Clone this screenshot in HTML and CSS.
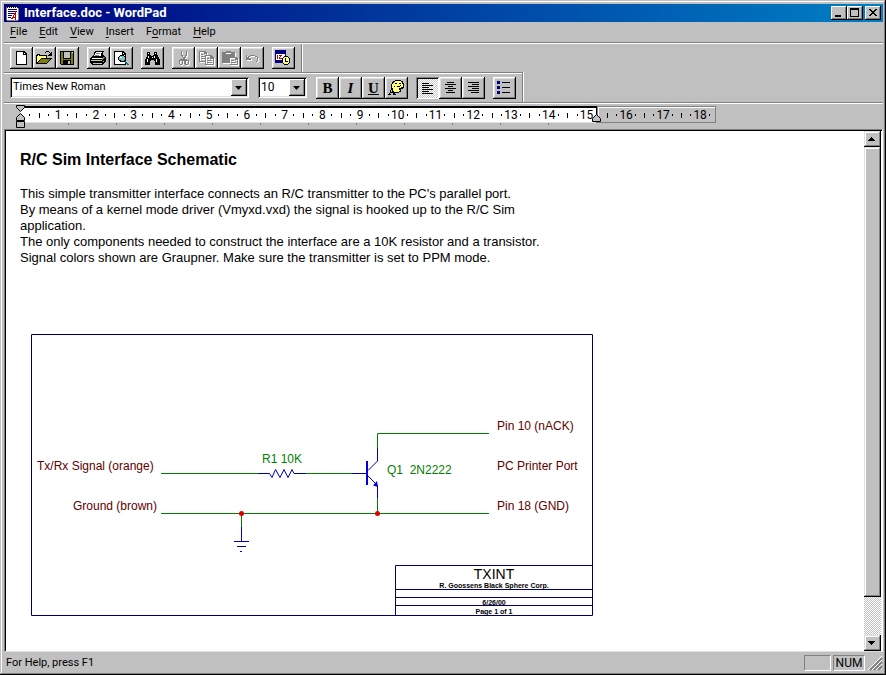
FILE: index.html
```html
<!DOCTYPE html>
<html lang="en">
<head>
<meta charset="utf-8">
<title>Interface.doc - WordPad</title>
<link rel="stylesheet" href="styles.css">
</head>
<body>
<div class="window">
  <header class="titlebar">
    <svg class="app-icon" width="16" height="16" viewBox="0 0 16 16" shape-rendering="crispEdges" aria-hidden="true">
      <path fill="#fff" d="M2 2h11v13H2z"/><path fill="#808080" d="M1 2h1v13H1zM13 3h1v12h-1zM2 15h11v1H2z"/>
      <path fill="#000" d="M2 1h1v2H2zM4 1h1v2H4zM6 1h1v2H6zM8 1h1v2H8zM10 1h1v2h-1zM12 1h1v2h-1z"/>
      <path fill="#000080" d="M3 4h9v1H3zM3 6h9v1H3zM3 8h7v1H3zM3 10h4v1H3zM3 12h3v1H3z"/>
      <path fill="none" stroke="#c00000" d="M6.500 14.500L10.500 7.500V14.500M8 12.500H11"/>
    </svg>
    <h1>Interface.doc - WordPad</h1>
    <div class="caption-buttons">
      <button type="button" aria-label="Minimize"><svg width="16" height="14" viewBox="0 0 16 14"><path d="M4 9h6v2H4z"/></svg></button>
      <button type="button" aria-label="Maximize"><svg width="16" height="14" viewBox="0 0 16 14"><path fill-rule="evenodd" d="M3 2h9v9H3zM4 4v6h7V4z"/></svg></button>
      <button type="button" aria-label="Close" class="close"><svg width="16" height="14" viewBox="0 0 16 14"><path d="M4 3h2v1h1v1h2V4h1V3h2v1h-1v1h-1v1H9v1h1v1h1v1h1v1h-2V9H9V8H7v1H6v1H4V9h1V8h1V7h1V6H6V5H5V4H4z"/></svg></button>
    </div>
  </header>

  <nav class="menubar" aria-label="Menu">
    <button type="button"><u>F</u>ile</button>
    <button type="button"><u>E</u>dit</button>
    <button type="button"><u>V</u>iew</button>
    <button type="button"><u>I</u>nsert</button>
    <button type="button">F<u>o</u>rmat</button>
    <button type="button"><u>H</u>elp</button>
  </nav>

  <div class="bars">
    <div class="toolbar" role="toolbar" aria-label="Standard">
      <div class="group">
        <button type="button" class="tool" aria-label="New"><svg viewBox="0 0 23 22"><path fill="#000" d="M6 4h8l3 3v11H6z"/><path fill="#fff" d="M7 5h6v3h3v9H7z"/><path fill="#fff" d="M14 6h1v1h-1z"/></svg></button>
        <button type="button" class="tool" aria-label="Open"><svg viewBox="0 0 23 22"><path d="M3 8h1V7h3v1h7v3h5v1h-1v1h-1v1h-1v1h-1v1h-1v1H3z"/><path fill="#ffff80" d="M4 9h1V8h1v1h7v2H8v1H7v1H6v1H5v1H4z"/><path fill="#808000" d="M8 12h9v1h-1v1h-1v1h-1v1H5v-1h1v-1h1v-1h1z"/><path d="M12 5h1V4h3v1h1v1h1V5h1v4h-4V8h1V7h1V6h-1V5h-3v1h-1z"/></svg></button>
        <button type="button" class="tool" aria-label="Save"><svg viewBox="0 0 23 22"><path d="M4 4h14v14H5l-1-1z"/><path fill="#808000" d="M5 5h2v7h8V5h2v12h-2v-4H7v4H5z"/><path fill="#c0c0c0" d="M8 5h6v6H8zM12 14h2v3h-2z"/><path fill="#fff" d="M16 5h1v1h-1z"/></svg></button>
      </div>
      <div class="group">
        <button type="button" class="tool" aria-label="Print"><svg viewBox="0 0 23 22"><path d="M8 4h9v1h-1v3h1v1h1v1h1v5h-1v1h-1v1h-1v1H5v-1H4v-1H3v-5h1v-1h1V9h1V8h1V5h1z"/><path fill="#fff" d="M9 5h6v1h-1v3H7V8h1V6h1zM5 11h10v1H5z"/><path fill="#808080" d="M9 6h4v1H9zM8 8h4v1H8zM17 10h1v1h-1v1h-1v1h-1v-2h1v-1h1z"/><path fill="#c0c0c0" d="M4 13h11v1H4zM6 16h9v1H6zM16 14h1v1h-1z"/><path fill="#e0e000" d="M11 13h3v1h-3z"/></svg></button>
        <button type="button" class="tool" aria-label="Print preview"><svg viewBox="0 0 23 22"><path d="M4 4h9l3 3v11H4z"/><path fill="#fff" d="M5 5h7v3h3v9H5zM13 6h1v1h-1z"/><path d="M10 8h4v1h1v1h1v4h-1v1h-5v-1H9v-1H8v-3h1V9h1z"/><path fill="#80c0c0" d="M10 9h4v1h1v3h-1v1h-3v-1H9v-3h1z"/><path fill="#fff" d="M10 10h2v1h-2z"/><path fill="#008080" d="M15 14h1v1h1v1h1v1h1v1h-2v-1h-1v-1h-1z"/></svg></button>
      </div>
      <div class="group">
        <button type="button" class="tool" aria-label="Find"><svg viewBox="0 0 23 22"><path d="M6 5h3v3h1v1h2V8h1V5h3v3h1v2h1v2h1v6h-5v-4h-1v-1h-3v1H9v4H4v-6h1v-2h1z"/><path fill="#fff" d="M7 6h1v1H7zM7 9h1v2H7zM6 12h1v3H6zM14 6h1v1h-1zM13 9h1v2h-1zM15 12h1v3h-1zM11 10h1v1h-1z"/></svg></button>
      </div>
      <div class="group">
        <button type="button" class="tool" aria-label="Cut" disabled><svg viewBox="0 0 23 22"><path d="M9 4h1v4h1v2h2V8h1V4h1v5h-1v2h-1v1h2v1h2v4h-1v1h-3v-1h-1v-3h-1v-1h0v4h-1v1H8v-1H7v-4h1v-1h3v-2h-1V9H9zM8 14v3h2v-3zM14 14v3h2v-3z" fill-rule="evenodd"/></svg></button>
        <button type="button" class="tool" aria-label="Copy" disabled><svg viewBox="0 0 23 22"><path fill-rule="evenodd" d="M4 4h6l2 2v2h4l3 3v7h-9v-3H4zM5 5v9h5V8h1V7H9V5zM11 9v8h7v-5h-3V9zM6 7h2v1H6zM6 9h4v1H6zM6 11h4v1H6zM12 11h2v1h-2zM12 13h5v1h-5zM12 15h5v1h-5z"/></svg></button>
        <button type="button" class="tool" aria-label="Paste" disabled><svg viewBox="0 0 23 22"><path fill-rule="evenodd" d="M4 5h4V4h5v1h4v5h1l2 2v6h-8v-2H4zM8 6v1h5V6zM12 11v6h7v-4h-2v-2zM13 13h3v1h-3zM13 15h5v1h-5z"/></svg></button>
        <button type="button" class="tool" aria-label="Undo" disabled><svg viewBox="0 0 23 22"><path d="M5 8h1v2h1V9h2V8h5v1h2v1h1v4h-1v1h-1v-1h1v-4h-2V9H9v1H8v1h2v2H5z"/></svg></button>
      </div>
      <div class="group">
        <button type="button" class="tool" aria-label="Date/Time"><svg viewBox="0 0 23 22"><path fill="#000080" d="M3 3h11v13H3z"/><path fill="#fff" d="M4 7h9v6H4z"/><path fill="#c00000" d="M5 8h1v4H5zM7 8h3v1H9v1H8v1h2v1H7v-2h1V9H7z"/><path d="M12 9h4v1h1v1h1v5h-1v1h-1v1h-4v-1h-1v-1h-1v-5h1v-1h1z"/><path fill="#ffff80" d="M12 10h4v1h1v5h-1v1h-4v-1h-1v-5h1z"/><path d="M13 11h1v3h2v1h-3z"/></svg></button>
      </div>
    </div>

    <div class="toolbar format" role="toolbar" aria-label="Formatting">
      <div class="combo font-name">
        <select aria-label="Font"><option>Times New Roman</option><option>Arial</option></select>
        <span class="drop" aria-hidden="true"></span>
      </div>
      <div class="combo font-size">
        <select aria-label="Font size"><option>10</option><option>12</option></select>
        <span class="drop" aria-hidden="true"></span>
      </div>
      <div class="group">
        <button type="button" class="tool letter" aria-label="Bold">B</button>
        <button type="button" class="tool letter italic" aria-label="Italic">I</button>
        <button type="button" class="tool letter underline" aria-label="Underline">U</button>
        <button type="button" class="tool" aria-label="Color"><svg viewBox="0 0 23 22"><path d="M10 3h6v1h2v2h1v5h-1v1h-2v3h-2v1H9v-1H7v-3H6V7h1V5h1V4h2z"/><path fill="#ffff80" d="M10 4h6v1h1v2h1v3h-2v1h-2v2h1v1h-1v1H9v-1H8v-3H7V7h1V6h1V5h1z"/><path d="M10 6h2v1h-2zM14 6h2v1h-2zM9 9h1v1H9zM12 9h3v1h-3zM15 8h1v1h-1z"/><path fill="none" stroke="#000" d="M4.500 17.500L6.500 11.500L9.500 17.500M5 15.500H9M3 17.500H6M8 17.500H11"/></svg></button>
      </div>
      <div class="group">
        <button type="button" class="tool pressed" aria-label="Align left" aria-pressed="true"><svg viewBox="0 0 23 22"><path d="M6 6h7v1H6zM6 8h11v1H6zM6 10h7v1H6zM6 12h11v1H6zM6 14h7v1H6zM6 16h11v1H6z"/></svg></button>
        <button type="button" class="tool" aria-label="Center"><svg viewBox="0 0 23 22"><path d="M8 5h7v1H8zM6 7h11v1H6zM9 9h5v1H9zM6 11h11v1H6zM9 13h5v1H9zM7 15h9v1H7z"/></svg></button>
        <button type="button" class="tool" aria-label="Align right"><svg viewBox="0 0 23 22"><path d="M6 5h11v1H6zM10 7h7v1h-7zM6 9h11v1H6zM10 11h7v1h-7zM6 13h11v1H6zM9 15h8v1H9z"/></svg></button>
      </div>
      <div class="group">
        <button type="button" class="tool" aria-label="Bullets"><svg viewBox="0 0 23 22"><path fill="#000080" d="M4 4h3v3H4zM4 9h3v3H4zM4 14h3v3H4z"/><path d="M9 5h8v1H9zM9 10h8v1H9zM9 15h8v1H9z"/></svg></button>
      </div>
    </div>
  </div>

  <div class="ruler" aria-label="Ruler">
    <div class="zone active">
      <i class="dot"></i><i class="tick"></i><i class="dot"></i><span>1</span>
      <i class="dot"></i><i class="tick"></i><i class="dot"></i><span>2</span>
      <i class="dot"></i><i class="tick"></i><i class="dot"></i><span>3</span>
      <i class="dot"></i><i class="tick"></i><i class="dot"></i><span>4</span>
      <i class="dot"></i><i class="tick"></i><i class="dot"></i><span>5</span>
      <i class="dot"></i><i class="tick"></i><i class="dot"></i><span>6</span>
      <i class="dot"></i><i class="tick"></i><i class="dot"></i><span>7</span>
      <i class="dot"></i><i class="tick"></i><i class="dot"></i><span>8</span>
      <i class="dot"></i><i class="tick"></i><i class="dot"></i><span>9</span>
      <i class="dot"></i><i class="tick"></i><i class="dot"></i><span>10</span>
      <i class="dot"></i><i class="tick"></i><i class="dot"></i><span>11</span>
      <i class="dot"></i><i class="tick"></i><i class="dot"></i><span>12</span>
      <i class="dot"></i><i class="tick"></i><i class="dot"></i><span>13</span>
      <i class="dot"></i><i class="tick"></i><i class="dot"></i><span>14</span>
      <i class="dot"></i><i class="tick"></i><i class="dot"></i><span>15</span>
      <svg class="indent left" width="9" height="24" viewBox="0 0 9 24" aria-hidden="true"><path fill="#c0c0c0" stroke="#000" d="M.500 .500h8v2l-4 4l-4-4zM4.500 8.500l4 4v3h-8v-3zM.500 16.500h8v6h-8z"/></svg>
      <svg class="indent right" width="9" height="9" viewBox="0 0 9 9" aria-hidden="true"><path fill="#c0c0c0" stroke="#000" d="M4.500 .500l4 4v3h-8v-3z"/></svg>
    </div>
    <div class="zone rest">
      <i class="tick"></i><i class="dot"></i><span>16</span><i class="dot"></i>
      <i class="tick"></i><i class="dot"></i><span>17</span><i class="dot"></i>
      <i class="tick"></i><i class="dot"></i><span>18</span><i class="dot"></i>
    </div>
  </div>

  <div class="docframe">
    <main class="document">
      <h2>R/C Sim Interface Schematic</h2>
      <p>This simple transmitter interface connects an R/C transmitter to the PC's parallel port.<br>
      By means of a kernel mode driver (Vmyxd.vxd) the signal is hooked up to the R/C Sim<br>
      application.<br>
      The only components needed to construct the interface are a 10K resistor and a transistor.<br>
      Signal colors shown are Graupner. Make sure the transmitter is set to PPM mode.</p>
      <svg class="schematic" width="562" height="282" viewBox="31 334 562 282" role="img" aria-label="Transmitter interface schematic">
        <g class="frame">
          <path d="M31.500 334.500h561v281h-561zM592.500 565.500H395.500V615.500M395.500 589.500h197M395.500 597.500h197M395.500 605.500h197"/>
        </g>
        <g class="wire">
          <path d="M161 473.500H258M306 473.500H352M377.500 448V433.500H489M377.500 498V513M161 513.500H489M241.500 513V527"/>
        </g>
        <g class="part">
          <path d="M258 473.500H269.500L272 477.500L275.500 469.500L280 477.500L284 469.500L288 477.500L292 469.500L294 473.500H306"/>
          <path d="M352 473.500H367M368 470.500L377.500 461V448M368 476L377.500 485.500V498"/>
          <path d="M241.500 527V541M234 541.500H249M237 546.500H246M240 551.500H242"/>
        </g>
        <path class="solid" d="M366 461h2v24h-2zM373 485.500L377 481L378 487z"/>
        <circle class="node" cx="241.500" cy="513.500" r="2.500"/><circle class="node" cx="377.500" cy="513.500" r="2.500"/>
        <g class="pin">
          <text x="37" y="470">Tx/Rx Signal (orange)</text>
          <text x="73" y="510">Ground (brown)</text>
          <text x="497" y="430">Pin 10 (nACK)</text>
          <text x="497" y="470">PC Printer Port</text>
          <text x="497" y="510">Pin 18 (GND)</text>
        </g>
        <g class="value">
          <text x="262" y="463">R1 10K</text>
          <text x="387" y="474">Q1&#160; 2N2222</text>
        </g>
        <g class="block">
          <text class="name" x="494" y="579">TXINT</text>
          <text x="494" y="588">R. Goossens Black Sphere Corp.</text>
          <text x="494" y="605">6/26/00</text>
          <text x="494" y="614">Page 1 of 1</text>
        </g>
      </svg>
    </main>
    <div class="scrollbar">
      <button type="button" aria-label="Scroll up"><svg width="16" height="16" viewBox="0 0 16 16"><path d="M7 6h1v1h1v1h1v1h1v1H4V9h1V8h1V7h1z"/></svg></button>
      <div class="thumb"></div>
      <div class="track"></div>
      <button type="button" aria-label="Scroll down"><svg width="16" height="16" viewBox="0 0 16 16"><path d="M4 6h7v1h-1v1H9v1H8v1H7V9H6V8H5V7H4z"/></svg></button>
    </div>
  </div>

  <footer class="status">
    <span class="message">For Help, press F1</span>
    <span class="pane"></span>
    <span class="pane wide">NUM</span>
    <svg class="grip" width="16" height="16" viewBox="0 0 16 16" aria-hidden="true"><path stroke="#808080" stroke-width="2" d="M3 15L15 3M7 15L15 7M11 15L15 11"/><path stroke="#fff" d="M1 15L15 1M5 15L15 5M9 15L15 9"/></svg>
  </footer>
</div>
</body>
</html>
```
FILE: styles.css
```css
* { box-sizing: border-box; }
body {
  margin: 0;
  background: #c0c0c0;
  color: #000;
  font: 11px/14px Roboto, "Liberation Sans", sans-serif;
}
button, select { font: inherit; color: inherit; margin: 0; padding: 0; border: 0; border-radius: 0; background: #c0c0c0; }
svg { display: block; }
h1, h2, p { margin: 0; }

.window {
  display: flex;
  flex-direction: column;
  min-height: 100vh;
  padding: 4px 3px 3px 4px;
  box-shadow: inset -1px -1px #000, inset 1px 1px #c0c0c0, inset -2px -2px #808080, inset 2px 2px #fff;
}

.titlebar {
  display: flex;
  align-items: center;
  height: 18px;
  padding: 0 2px 0 1px;
  background: linear-gradient(90deg, #000080, #0080c4);
  color: #fff;
}
.titlebar h1 { flex: 1; margin-left: 3px; font-size: 13px; line-height: 18px; font-weight: 700; }
.caption-buttons { display: flex; }
.caption-buttons button {
  width: 16px;
  height: 14px;
  box-shadow: inset -1px -1px #000, inset 1px 1px #fff, inset -2px -2px #808080;
}
.caption-buttons .close { margin-left: 2px; }

.menubar { display: flex; height: 20px; }
.menubar button { padding: 0 6px; line-height: 20px; }
.menubar u { text-underline-offset: 2px; }

.bars { border-top: 1px solid #808080; border-bottom: 1px solid #808080; box-shadow: inset 0 1px #fff, 0 1px #fff; padding-top: 1px; }
.toolbar {
  display: flex;
  gap: 8px;
  width: fit-content;
  height: 28px;
  padding: 3px 6px 3px;
  border-right: 1px solid #808080;
  box-shadow: 1px 0 #fff;
}
.toolbar.format {
  height: 30px;
  border-top: 1px solid #808080;
  box-shadow: 1px 0 #fff, inset 0 1px #fff;
  padding-top: 4px;
}
.group { display: flex; }
.tool {
  width: 23px;
  height: 22px;
  box-shadow: inset -1px -1px #000, inset 1px 1px #fff, inset -2px -2px #808080, inset 2px 2px #dfdfdf;
}
.tool svg { width: 23px; height: 22px; shape-rendering: crispEdges; }
.tool:disabled svg { fill: #808080; filter: drop-shadow(1px 1px 0 #fff); }
.tool.pressed {
  background: repeating-conic-gradient(#fff 0 25%, #c8c8c8 0 50%) 0 0 / 2px 2px;
  box-shadow: inset 1px 1px #808080, inset -1px -1px #fff, inset 2px 2px #000;
}
.letter { font: 700 15px/20px "Liberation Serif", serif; text-align: center; }
.italic { font-style: italic; }
.underline { text-decoration: underline; }

.combo {
  position: relative;
  height: 21px;
  background: #fff;
  box-shadow: inset 1px 1px #808080, inset -1px -1px #fff, inset 2px 2px #000, inset -2px -2px #dfdfdf;
}
.combo select {
  width: 100%;
  height: 21px;
  padding: 0 20px 1px 3px;
  appearance: none;
  background: transparent;
}
.font-name { width: 239px; }
.font-size { width: 49px; margin: 0 1px; }
.font-size select { font-size: 12px; }
.drop {
  position: absolute;
  top: 2px;
  right: 2px;
  width: 16px;
  height: 17px;
  background: #c0c0c0;
  box-shadow: inset -1px -1px #000, inset 1px 1px #fff, inset -2px -2px #808080;
  pointer-events: none;
}
.drop::after {
  content: "";
  display: block;
  width: 7px;
  height: 4px;
  margin: 7px 4px;
  background: #000;
  clip-path: polygon(0 0, 100% 0, 50% 100%);
}

.ruler { display: flex; height: 26px; padding: 3px 0 0 16px; }
.zone { position: relative; display: flex; align-items: center; height: 17px; }
.zone > span, .zone > i { flex: 1 1 0; min-width: 0; display: flex; justify-content: center; }
.zone > span { font-size: 12px; line-height: 14px; }
.active { width: 577px; padding: 0 5px; background: #fff; border-top: 2px solid #000; border-right: 1px solid #000; border-bottom: 1px solid #dfdfdf; }
.active::after {
  content: "";
  position: absolute;
  left: 0;
  right: 0;
  top: 15px;
  height: 2px;
  background: repeating-linear-gradient(90deg, #808080 0 1px, transparent 1px 48px);
}
.rest { width: 119px; padding: 1px 1px 0 5px; border: 1px solid #808080; box-shadow: inset 1px 1px #fff; }
.dot::before { content: ""; width: 1px; height: 2px; background: #000; }
.tick::before { content: ""; width: 1px; height: 5px; background: #000; }
.indent { position: absolute; z-index: 1; }
.indent.left { left: -4px; top: -3px; }
.indent.right { right: -5px; top: 6px; }

.docframe {
  display: flex;
  flex: 1;
  background: #fff;
  border: 1px solid;
  border-color: #808080 #fff #dfdfdf #808080;
  box-shadow: inset 1px 1px #000;
  padding: 1px 1px 0 1px;
}
.document { flex: 1; padding: 19px 14px 0; font: 13px/16px "Liberation Sans", sans-serif; }
.document h2 { font-size: 16px; line-height: 20px; margin-bottom: 16px; }
.schematic { margin: 68px 0 0 11px; }
.frame path { fill: none; stroke: #000060; }
.wire path { fill: none; stroke: #008000; }
.part path { fill: none; stroke: #0000a8; }
.solid { fill: #0000e0; }
.node { fill: #e00000; }
.pin, .value { font-size: 12px; }
.pin { fill: #600000; }
.value { fill: #008000; }
.block { font-size: 7px; font-weight: 700; text-anchor: middle; }
.block .name { font-size: 14px; font-weight: 400; }

.scrollbar { display: flex; flex-direction: column; width: 17px; }
.scrollbar button, .thumb {
  height: 16px;
  background: #c0c0c0;
  box-shadow: inset -1px -1px #000, inset 1px 1px #dfdfdf, inset -2px -2px #808080, inset 2px 2px #fff;
}
.scrollbar .thumb { flex: 450 1 0; }
.track { flex: 38 1 0; background: repeating-conic-gradient(#fff 0 25%, #c0c0c0 0 50%) 0 0 / 2px 2px; }

.status { display: flex; align-items: flex-start; height: 20px; padding: 3px 0 0 2px; gap: 2px; }
.message { flex: 1; line-height: 16px; }
.pane { width: 27px; height: 16px; border: 1px solid; border-color: #808080 #fff #fff #808080; line-height: 14px; text-align: center; }
.pane.wide { width: 32px; font-size: 12px; }
```
